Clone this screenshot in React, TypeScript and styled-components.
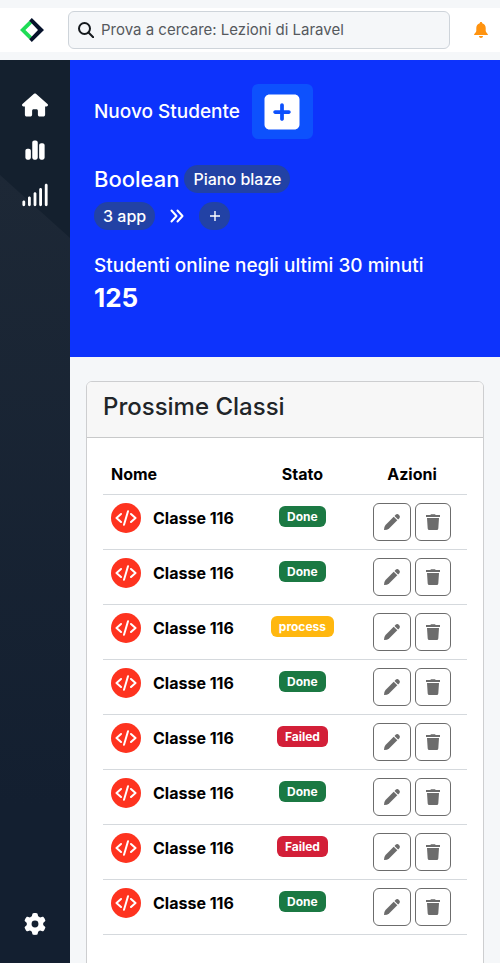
import React from "react";
import styled, { createGlobalStyle } from "styled-components";
import { FaHouse, FaChartSimple, FaSignal, FaGear, FaSquarePlus } from "react-icons/fa6";

const GlobalStyle = createGlobalStyle`
  *, *::before, *::after { box-sizing: border-box; }
  body {
    margin: 0;
    background: #f5f7f9;
    color: #000;
    font: 400 16px/24px Inter, "Liberation Sans", sans-serif;
  }
  button, input { font: inherit; }
  h1, h2, h3, p, ul { margin: 0; padding: 0; }
  svg { display: block; flex: none; }
`;

const Page = styled.div`
  display: flex;
  flex-direction: column;
  height: 100vh;
  padding-top: 8px;
`;

const TopBar = styled.header`
  display: flex;
  align-items: center;
  flex: none;
  height: 44px;
  margin-bottom: 8px;
  padding-right: 12px;
  background: #fff;
`;

const LogoLink = styled.a`
  display: flex;
  flex: none;
  justify-content: center;
  width: 64px;
`;

const SearchBox = styled.label`
  display: flex;
  flex: 1;
  align-items: center;
  gap: 7px;
  height: 38px;
  margin: 0 24px 0 4px;
  padding: 0 9px;
  border: 1px solid #ced4da;
  border-radius: 6px;
  background: #f5f7f9;
  color: #15191d;
`;

const SearchInput = styled.input`
  flex: 1;
  min-width: 0;
  padding: 0;
  border: 0;
  outline: 0;
  background: transparent;
  font-size: 15px;
  &::placeholder { color: #55595d; opacity: 1; }
`;

const BellButton = styled.button`
  display: flex;
  padding: 0;
  border: 0;
  background: none;
  color: #ff930f;
  cursor: pointer;
`;

const Shell = styled.div`
  display: flex;
  flex: 1;
  min-height: 0;
`;

const Sidebar = styled.nav`
  position: relative;
  display: flex;
  flex: none;
  flex-direction: column;
  align-items: center;
  gap: 17px;
  width: 70px;
  padding: 31px 0 25px;
  background: #14202e;
  &::before {
    content: "";
    position: absolute;
    inset: 115px 0 0;
    clip-path: polygon(0 0, 100% 63px, 100% 100%, 0 100%);
    background: linear-gradient(#1d2836, #131f30 80%);
  }
`;

const NavLink = styled.a<{ $end?: boolean }>`
  position: relative;
  display: flex;
  align-items: center;
  height: 28px;
  margin-top: ${(p) => (p.$end ? "auto" : "0")};
  color: #fff;
`;

const Content = styled.main`
  flex: 1;
  min-width: 0;
  overflow-y: auto;
  scrollbar-width: none;
`;

const Hero = styled.section`
  padding: 24px 24px 43px;
  background: #0d33fc;
  color: #fff;
`;

const HeroRow = styled.div<{ $gap: number; $below: number }>`
  display: flex;
  align-items: center;
  gap: ${(p) => p.$gap}px;
  margin-bottom: ${(p) => p.$below}px;
`;

const HeroText = styled.h2`
  font-size: 19px;
  font-weight: 500;
  line-height: 24px;
`;

const HeroName = styled.h1`
  font-size: 22px;
  font-weight: 500;
  line-height: 28px;
`;

const HeroCount = styled.p`
  margin-top: 4px;
  font-size: 26px;
  font-weight: 700;
  line-height: 32px;
`;

const AddButton = styled.button`
  display: flex;
  align-items: center;
  justify-content: center;
  width: 61px;
  height: 55px;
  padding: 0;
  border: 0;
  border-radius: 6px;
  background: #0d51fd;
  color: #fff;
  cursor: pointer;
`;

const Pill = styled.span`
  display: inline-flex;
  align-items: center;
  height: 28px;
  padding: 0 9px;
  border-radius: 14px;
  background: #2242a5;
  font-size: 16px;
  font-weight: 500;
`;

const RoundButton = styled.button`
  display: flex;
  align-items: center;
  justify-content: center;
  width: 31px;
  height: 28px;
  padding: 0;
  border: 0;
  border-radius: 14px;
  background: #2242a5;
  color: #fff;
  cursor: pointer;
`;

const Card = styled.section`
  margin: 24px 16px 16px;
  border: 1px solid #cdced0;
  border-radius: 6px;
  background: #fff;
`;

const CardHeader = styled.div`
  padding: 9px 16px 14px;
  border-bottom: 1px solid #c8c9ca;
  border-radius: 5px 5px 0 0;
  background: #f7f7f7;
`;

const CardTitle = styled.h2`
  color: #212529;
  font-size: 24px;
  font-weight: 500;
  line-height: 32px;
`;

const CardBody = styled.div`
  padding: 16px 16px 48px;
`;

const Table = styled.table`
  width: 100%;
  border-collapse: collapse;
  table-layout: fixed;
`;

const Th = styled.th<{ $width?: string; $left?: boolean }>`
  width: ${(p) => p.$width ?? "auto"};
  padding: 8px;
  border-bottom: 1px solid #d5d9dd;
  text-align: ${(p) => (p.$left ? "left" : "center")};
  font-weight: 700;
`;

const Td = styled.td`
  padding: 8px;
  border-bottom: 1px solid #d5d9dd;
  text-align: center;
  vertical-align: top;
`;

const ClassName = styled.div`
  display: flex;
  align-items: center;
  gap: 12px;
  font-weight: 700;
`;

const CodeBadge = styled.span`
  display: flex;
  align-items: center;
  justify-content: center;
  width: 30px;
  height: 30px;
  border-radius: 50%;
  background: #fe331f;
  color: #fff;
`;

const statusColors = { Done: "#1b7943", process: "#ffb70f", Failed: "#d31f38" };
type Status = keyof typeof statusColors;

const StatusBadge = styled.span<{ $status: Status }>`
  display: inline-block;
  margin-top: 3px;
  padding: 0 8px;
  border-radius: 6px;
  background: ${(p) => statusColors[p.$status]};
  color: #fff;
  font-size: 12px;
  font-weight: 700;
  line-height: 21px;
`;

const Actions = styled.div`
  display: flex;
  justify-content: center;
  gap: 4px;
`;

const ActionButton = styled.button`
  display: flex;
  align-items: center;
  justify-content: center;
  height: 38px;
  padding: 0 10px;
  border: 1px solid #6c6c6c;
  border-radius: 6px;
  background: #fff;
  color: #6c6c6c;
  cursor: pointer;
`;

const Logo = () => (
  <svg width="24" height="24" viewBox="0 0 24 24" aria-hidden="true">
    <path d="M0 12 9.300 2.700 12 5.400 5.400 12 12 18.600 9.300 21.300z" fill="#1edc55" />
    <path d="M11.800 0 24 12 11.800 24 9.200 21.300 18 12 9.200 2.700z" fill="#06122b" />
  </svg>
);

const SearchIcon = () => (
  <svg width="16" height="16" viewBox="0 0 16 16" fill="none" stroke="currentColor" strokeWidth="2" aria-hidden="true">
    <circle cx="6.500" cy="6.500" r="5.500" />
    <path d="m10.500 10.500 4.700 4.700" strokeLinecap="round" />
  </svg>
);

const BellIcon = () => (
  <svg width="14" height="16" viewBox="0 0 14 16" fill="currentColor" aria-hidden="true">
    <path d="M7 0c.8 0 1.200.5 1.200 1.200C10.500 1.800 11.700 4 11.700 6v3c0 1.500 2.300 2.500 2.300 4H0c0-1.500 2.300-2.500 2.300-4V6c0-2 1.200-4.200 3.500-4.800C5.800.5 6.200 0 7 0zM5 14h4c0 1.300-.9 2-2 2s-2-.7-2-2z" />
  </svg>
);

const CodeIcon = () => (
  <svg width="22" height="16" viewBox="0 0 22 16" fill="none" stroke="currentColor" strokeWidth="2" strokeLinecap="round" strokeLinejoin="round" aria-hidden="true">
    <path d="M6 4 1.500 8 6 12M16 4l4.500 4-4.500 4M13 1.200 9 14.800" />
  </svg>
);

const PencilIcon = () => (
  <svg width="16" height="16" viewBox="0 0 16 16" fill="currentColor" aria-hidden="true">
    <path d="M0 16Q0 12.500 1.500 10.900L9.700 2.700 13.300 6.300 5.100 14.500Q3.500 16 0 16z" />
    <path d="M10.500 1.900 11.600.8Q13.300-.7 15 1T15.200 4.400L14.100 5.500z" />
  </svg>
);

const TrashIcon = () => (
  <svg width="14" height="16" viewBox="0 0 14 16" fill="currentColor" aria-hidden="true">
    <path d="M0 1h4.300l.7-.8h4l.7.800H14v2H0zM1 4h12l-.7 10.500Q12.200 16 10.700 16H3.300Q1.800 16 1.700 14.500z" />
  </svg>
);

const DoubleChevron = () => (
  <svg width="14" height="14" viewBox="0 0 14 14" fill="none" stroke="currentColor" strokeWidth="2" strokeLinecap="round" strokeLinejoin="round" aria-hidden="true">
    <path d="M1.500 1.500 6.500 7l-5 5.500M7.500 1.500 12.500 7l-5 5.500" />
  </svg>
);

const ThinPlus = () => (
  <svg width="10" height="10" viewBox="0 0 10 10" stroke="currentColor" strokeWidth="1.400" aria-hidden="true">
    <path d="M5 0v10M0 5h10" />
  </svg>
);

const rows: Status[] = ["Done", "Done", "process", "Done", "Failed", "Done", "Failed", "Done"];

export default function App() {
  return (
    <>
      <GlobalStyle />
      <Page>
        <TopBar>
          <LogoLink href="#" aria-label="Home"><Logo /></LogoLink>
          <SearchBox>
            <SearchIcon />
            <SearchInput type="search" aria-label="Cerca" placeholder="Prova a cercare: Lezioni di Laravel" />
          </SearchBox>
          <BellButton aria-label="Notifiche"><BellIcon /></BellButton>
        </TopBar>
        <Shell>
          <Sidebar>
            <NavLink href="#" aria-label="Home"><FaHouse size={26} /></NavLink>
            <NavLink href="#" aria-label="Statistiche"><FaChartSimple size={22} /></NavLink>
            <NavLink href="#" aria-label="Segnale"><FaSignal size={28} /></NavLink>
            <NavLink href="#" aria-label="Impostazioni" $end><FaGear size={22} /></NavLink>
          </Sidebar>
          <Content>
            <Hero>
              <HeroRow $gap={12} $below={26}>
                <HeroText>Nuovo Studente</HeroText>
                <AddButton aria-label="Aggiungi studente"><FaSquarePlus size={40} /></AddButton>
              </HeroRow>
              <HeroRow $gap={5} $below={9}>
                <HeroName>Boolean</HeroName>
                <Pill>Piano blaze</Pill>
              </HeroRow>
              <HeroRow $gap={15} $below={24}>
                <Pill>3 app</Pill>
                <DoubleChevron />
                <RoundButton aria-label="Aggiungi app"><ThinPlus /></RoundButton>
              </HeroRow>
              <HeroText>Studenti online negli ultimi 30 minuti</HeroText>
              <HeroCount>125</HeroCount>
            </Hero>
            <Card>
              <CardHeader><CardTitle>Prossime Classi</CardTitle></CardHeader>
              <CardBody>
                <Table>
                  <thead>
                    <tr>
                      <Th $left>Nome</Th>
                      <Th $width="30%">Stato</Th>
                      <Th $width="110px">Azioni</Th>
                    </tr>
                  </thead>
                  <tbody>
                    {rows.map((status, i) => (
                      <tr key={i}>
                        <Td>
                          <ClassName>
                            <CodeBadge><CodeIcon /></CodeBadge>
                            Classe 116
                          </ClassName>
                        </Td>
                        <Td><StatusBadge $status={status}>{status}</StatusBadge></Td>
                        <Td>
                          <Actions>
                            <ActionButton aria-label="Modifica"><PencilIcon /></ActionButton>
                            <ActionButton aria-label="Elimina"><TrashIcon /></ActionButton>
                          </Actions>
                        </Td>
                      </tr>
                    ))}
                  </tbody>
                </Table>
              </CardBody>
            </Card>
          </Content>
        </Shell>
      </Page>
    </>
  );
}
